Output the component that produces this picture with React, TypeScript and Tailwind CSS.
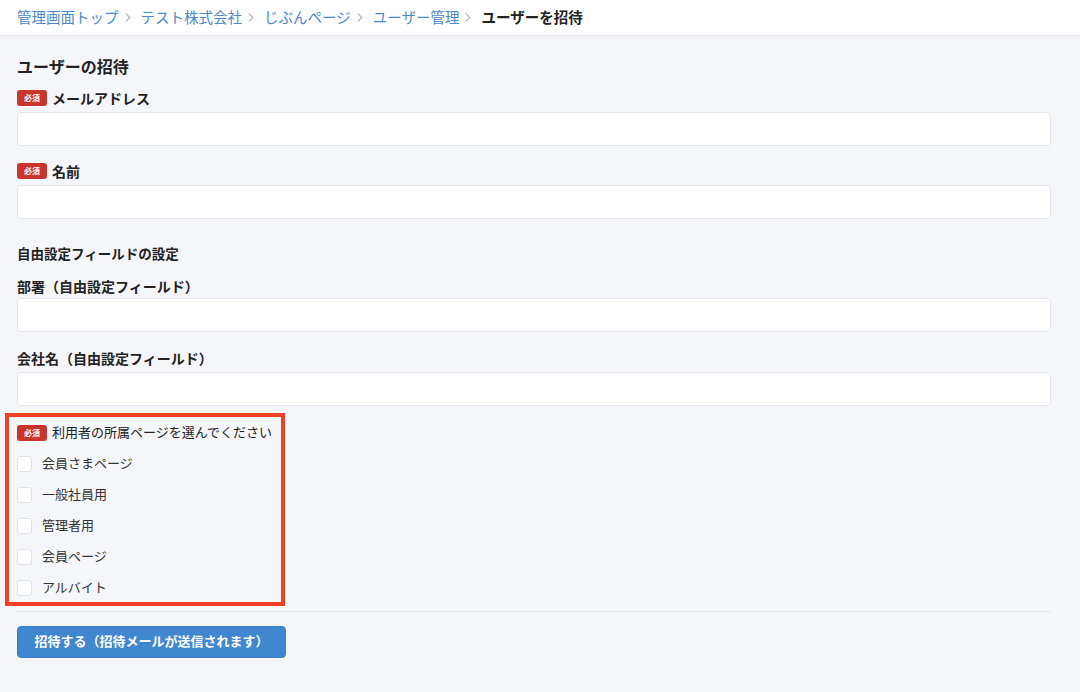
import React from 'react';

const crumbs = ['管理画面トップ', 'テスト株式会社', 'じぶんページ', 'ユーザー管理'];

const pages = ['会員さまページ', '一般社員用', '管理者用', '会員ページ', 'アルバイト'];

const RequiredBadge: React.FC = () => (
  <span className="inline-flex h-[16px] w-[30px] shrink-0 items-center justify-center rounded-[3px] bg-[#c8352c] text-[8px] font-bold leading-none text-white">
    必須
  </span>
);

interface FieldProps {
  label: string;
  required?: boolean;
  className?: string;
  inputClassName?: string;
}

const Field: React.FC<FieldProps> = ({ label, required = false, className = '', inputClassName = 'mt-[4px]' }) => (
  <div className={className}>
    <label className="flex h-[20px] items-center gap-[5px] text-[14px] font-bold text-[#222]">
      {required && <RequiredBadge />}
      {label}
    </label>
    <input
      type="text"
      className={`block h-[34px] w-full rounded-[4px] border border-[#e3e5ea] bg-white px-3 text-[14px] outline-none ${inputClassName}`}
    />
  </div>
);

const Chevron: React.FC = () => (
  <svg viewBox="0 0 6 10" className="ml-[6px] mr-[10px] h-[9px] w-[6px] shrink-0" fill="none">
    <path d="M1 1l4 4-4 4" stroke="#b3b7bd" strokeWidth="1.4" strokeLinecap="round" strokeLinejoin="round" />
  </svg>
);

export default function App() {
  return (
    <div
      className="min-h-[692px] bg-[#f5f6fa] text-[#333]"
      style={{ fontFamily: '"Noto Sans", "Noto Sans CJK JP", sans-serif' }}
    >
      <header className="flex h-[36px] items-center border-b border-[#e2e4e8] bg-white px-[17px] text-[14.5px] shadow-[0_1px_2px_rgba(0,0,0,0.04)]">
        {crumbs.map((c) => (
          <React.Fragment key={c}>
            <a className="text-[#4b88c9]">{c}</a>
            <Chevron />
          </React.Fragment>
        ))}
        <span className="font-bold text-[#222]">ユーザーを招待</span>
      </header>

      <main className="pl-[17px] pr-[29px] pt-[19px]">
        <h2 className="text-[16px] font-bold leading-6 text-[#222]">ユーザーの招待</h2>

        <Field label="メールアドレス" required className="mt-[9px]" />
        <Field label="名前" required className="mt-[15px]" />

        <h3 className="mt-[25px] h-[20px] text-[13.5px] font-semibold leading-5 text-[#222]">
          自由設定フィールドの設定
        </h3>

        <Field label="部署（自由設定フィールド）" className="mt-[12px]" inputClassName="mt-[2px]" />
        <Field label="会社名（自由設定フィールド）" className="mt-[16px]" />

        <div className="ml-[-12px] mt-[7px] flex w-[280px] flex-col gap-[11px] border-[4px] border-[#ee4126] pb-[4px] pl-[8px] pt-[6px]">
          <div className="flex h-[20px] items-center gap-[5px] text-[13px] text-[#222]">
            <RequiredBadge />
            利用者の所属ページを選んでください
          </div>
          {pages.map((p) => (
            <label key={p} className="flex h-[20px] items-center gap-[10px] text-[13px] text-[#333]">
              <span className="h-[16px] w-[15px] shrink-0 rounded-[3px] border border-[#dfe2e7] bg-white" />
              {p}
            </label>
          ))}
        </div>

        <div className="mt-[5px] border-t border-[#e3e5ea]" />

        <button className="mt-[14px] h-[32px] w-[269px] rounded-[4px] border border-[#3c80c6] bg-[#4187cf] text-[13px] font-bold text-white">
          招待する（招待メールが送信されます）
        </button>
      </main>
    </div>
  );
}
